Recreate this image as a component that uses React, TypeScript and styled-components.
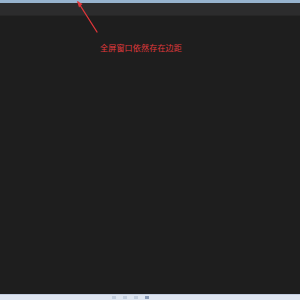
import { createGlobalStyle, styled } from "styled-components";

const Global = createGlobalStyle`
	html, body {
		margin: 0;
		padding: 0;
		width: 300px;
		height: 300px;
		overflow: hidden;
		background: #1e1e1e;
	}
	#root {
		height: 100%;
	}
`;

export default function App() {
	return (
		<>
			<Global />
			<Screen>
				<TitleStrip />
				<TabBar />
				<Body>
					<Arrow width="40" height="40" viewBox="0 0 40 40">
						<path d="M2 1 L21 31" stroke="#e0363a" strokeWidth="1.3" strokeLinecap="round" />
						<path d="M1 0 L6.5 3 L3 6.5 Z" fill="#e0363a" />
					</Arrow>
					<Note>全屏窗口依然存在边距</Note>
				</Body>
				<Taskbar>
					<TrayIcon />
					<TrayIcon />
					<TrayIcon />
					<TrayIcon $active />
				</Taskbar>
			</Screen>
		</>
	);
}

const Screen = styled.div`
	display: flex;
	flex-direction: column;
	width: 300px;
	height: 300px;
`;

const TitleStrip = styled.div`
	height: 3px;
	background: #98b4cf;
	flex-shrink: 0;
`;

const TabBar = styled.div`
	height: 12px;
	background: #2c2c2d;
	border-bottom: 1px solid #262626;
	flex-shrink: 0;
`;

const Body = styled.div`
	flex: 1;
	background: #1e1e1e;
	position: relative;
	padding: 27px 0 0 100px;
`;

const Arrow = styled.svg`
	position: absolute;
	left: 76px;
	top: -15px;
	overflow: visible;
`;

const Note = styled.div`
	font-family: "Noto Sans CJK SC", sans-serif;
	font-size: 8px;
	letter-spacing: 0.2px;
	line-height: 10px;
	color: #e23a3d;
	white-space: nowrap;
`;

const Taskbar = styled.div`
	height: 5px;
	flex-shrink: 0;
	background: #dfe6f1;
	border-top: 1px solid #c3cee0;
	display: flex;
	align-items: center;
	gap: 7px;
	padding-left: 112px;
`;

const TrayIcon = styled.div<{ $active?: boolean }>`
	width: 4px;
	height: 3px;
	background: ${(p) => (p.$active ? "#8a9cb8" : "#c2cddd")};
`;
